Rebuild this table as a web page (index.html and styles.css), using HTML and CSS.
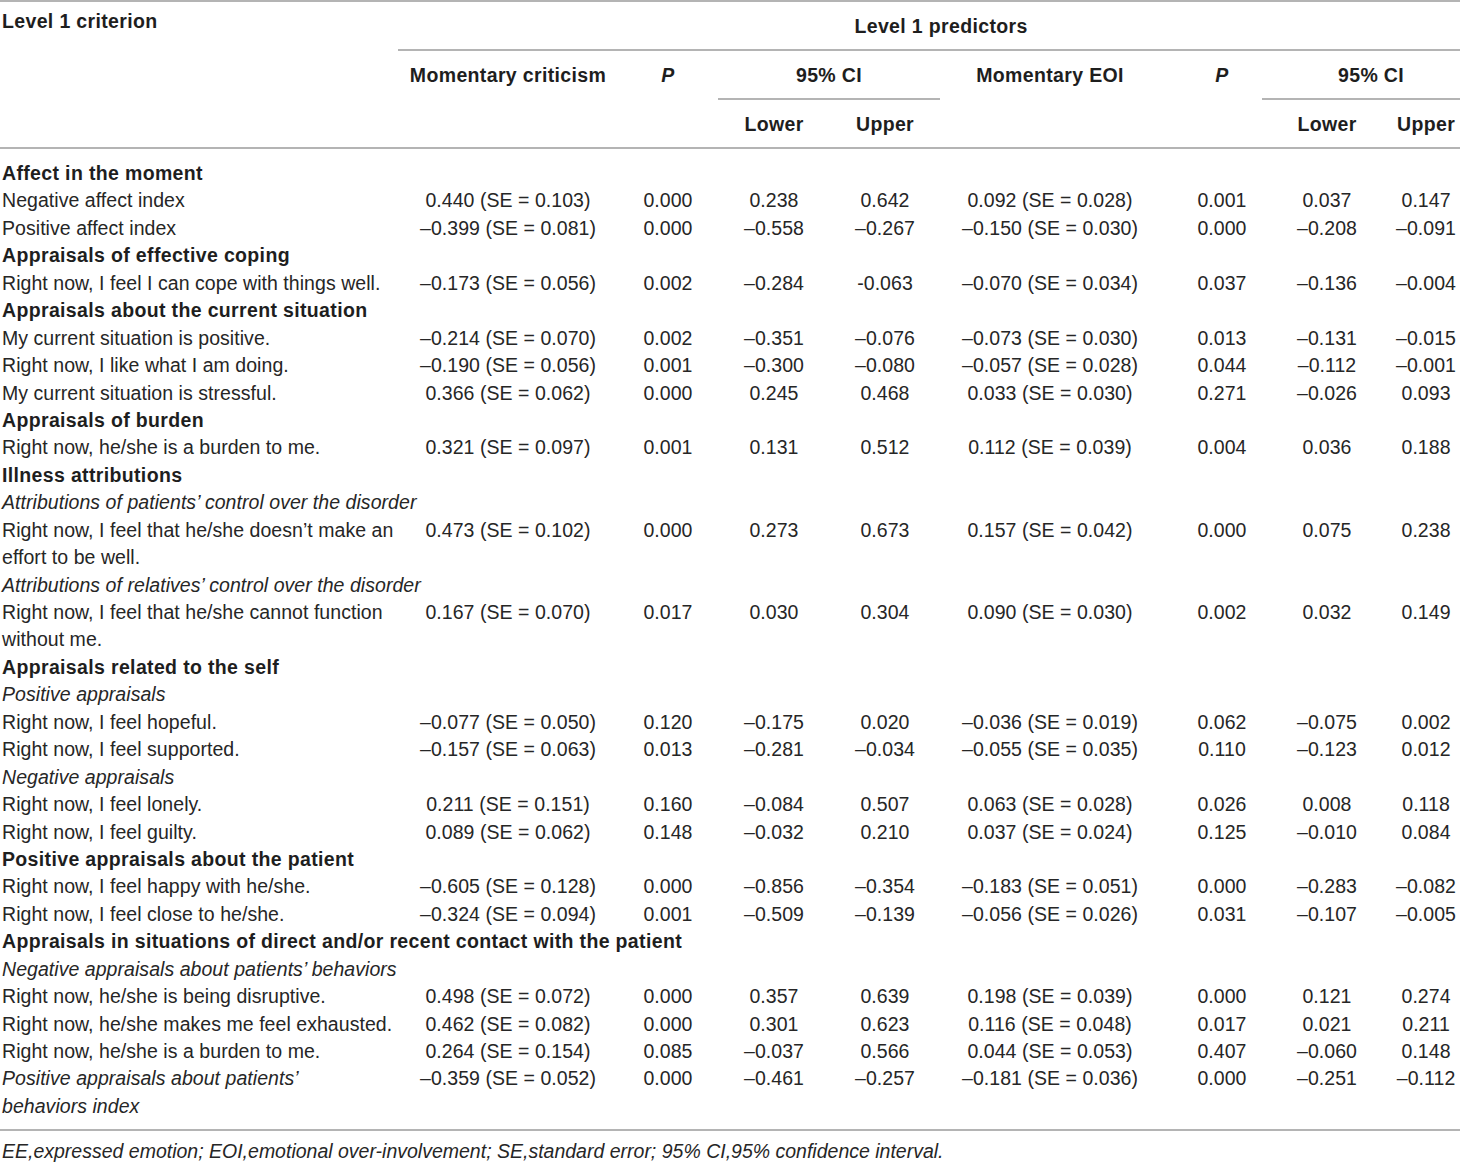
FILE: index.html
```html
<!DOCTYPE html>
<html lang="en">
<head>
<meta charset="utf-8">
<title>Level 1 predictors</title>
<link rel="stylesheet" href="styles.css">
</head>
<body>
<table class="tbl">
  <colgroup>
    <col class="c-crit">
    <col class="c-est">
    <col class="c-p">
    <col class="c-lo">
    <col class="c-up">
    <col class="c-est2">
    <col class="c-p2">
    <col class="c-lo2">
    <col class="c-up2">
  </colgroup>
  <thead>
    <tr>
      <th rowspan="3" class="h-crit">Level 1 criterion</th>
      <th colspan="8" class="h-pred line">Level 1 predictors</th>
    </tr>
    <tr>
      <th rowspan="2" class="h line">Momentary criticism</th>
      <th rowspan="2" class="h line"><i>P</i></th>
      <th colspan="2" class="h line">95% CI</th>
      <th rowspan="2" class="h line">Momentary EOI</th>
      <th rowspan="2" class="h line p2"><i>P</i></th>
      <th colspan="2" class="h line ci2">95% CI</th>
    </tr>
    <tr>
      <th class="h line">Lower</th>
      <th class="h line">Upper</th>
      <th class="h line">Lower</th>
      <th class="h line">Upper</th>
    </tr>
  </thead>
  <tbody>
    <tr class="sec first"><td colspan="9">Affect in the moment</td></tr>
    <tr><td>Negative affect index</td><td>0.440 (SE = 0.103)</td><td>0.000</td><td>0.238</td><td>0.642</td><td>0.092 (SE = 0.028)</td><td class="p2">0.001</td><td>0.037</td><td>0.147</td></tr>
    <tr><td>Positive affect index</td><td>–0.399 (SE = 0.081)</td><td>0.000</td><td>–0.558</td><td>–0.267</td><td>–0.150 (SE = 0.030)</td><td class="p2">0.000</td><td>–0.208</td><td>–0.091</td></tr>
    <tr class="sec"><td colspan="9">Appraisals of effective coping</td></tr>
    <tr><td>Right now, I feel I can cope with things well.</td><td>–0.173 (SE = 0.056)</td><td>0.002</td><td>–0.284</td><td>-0.063</td><td>–0.070 (SE = 0.034)</td><td class="p2">0.037</td><td>–0.136</td><td>–0.004</td></tr>
    <tr class="sec"><td colspan="9">Appraisals about the current situation</td></tr>
    <tr><td>My current situation is positive.</td><td>–0.214 (SE = 0.070)</td><td>0.002</td><td>–0.351</td><td>–0.076</td><td>–0.073 (SE = 0.030)</td><td class="p2">0.013</td><td>–0.131</td><td>–0.015</td></tr>
    <tr><td>Right now, I like what I am doing.</td><td>–0.190 (SE = 0.056)</td><td>0.001</td><td>–0.300</td><td>–0.080</td><td>–0.057 (SE = 0.028)</td><td class="p2">0.044</td><td>–0.112</td><td>–0.001</td></tr>
    <tr><td>My current situation is stressful.</td><td>0.366 (SE = 0.062)</td><td>0.000</td><td>0.245</td><td>0.468</td><td>0.033 (SE = 0.030)</td><td class="p2">0.271</td><td>–0.026</td><td>0.093</td></tr>
    <tr class="sec"><td colspan="9">Appraisals of burden</td></tr>
    <tr><td>Right now, he/she is a burden to me.</td><td>0.321 (SE = 0.097)</td><td>0.001</td><td>0.131</td><td>0.512</td><td>0.112 (SE = 0.039)</td><td class="p2">0.004</td><td>0.036</td><td>0.188</td></tr>
    <tr class="sec"><td colspan="9">Illness attributions</td></tr>
    <tr class="sub"><td colspan="9">Attributions of patients’ control over the disorder</td></tr>
    <tr><td>Right now, I feel that he/she doesn’t make an<br>effort to be well.</td><td>0.473 (SE = 0.102)</td><td>0.000</td><td>0.273</td><td>0.673</td><td>0.157 (SE = 0.042)</td><td class="p2">0.000</td><td>0.075</td><td>0.238</td></tr>
    <tr class="sub"><td colspan="9">Attributions of relatives’ control over the disorder</td></tr>
    <tr><td>Right now, I feel that he/she cannot function<br>without me.</td><td>0.167 (SE = 0.070)</td><td>0.017</td><td>0.030</td><td>0.304</td><td>0.090 (SE = 0.030)</td><td class="p2">0.002</td><td>0.032</td><td>0.149</td></tr>
    <tr class="sec"><td colspan="9">Appraisals related to the self</td></tr>
    <tr class="sub"><td colspan="9">Positive appraisals</td></tr>
    <tr><td>Right now, I feel hopeful.</td><td>–0.077 (SE = 0.050)</td><td>0.120</td><td>–0.175</td><td>0.020</td><td>–0.036 (SE = 0.019)</td><td class="p2">0.062</td><td>–0.075</td><td>0.002</td></tr>
    <tr><td>Right now, I feel supported.</td><td>–0.157 (SE = 0.063)</td><td>0.013</td><td>–0.281</td><td>–0.034</td><td>–0.055 (SE = 0.035)</td><td class="p2">0.110</td><td>–0.123</td><td>0.012</td></tr>
    <tr class="sub"><td colspan="9">Negative appraisals</td></tr>
    <tr><td>Right now, I feel lonely.</td><td>0.211 (SE = 0.151)</td><td>0.160</td><td>–0.084</td><td>0.507</td><td>0.063 (SE = 0.028)</td><td class="p2">0.026</td><td>0.008</td><td>0.118</td></tr>
    <tr><td>Right now, I feel guilty.</td><td>0.089 (SE = 0.062)</td><td>0.148</td><td>–0.032</td><td>0.210</td><td>0.037 (SE = 0.024)</td><td class="p2">0.125</td><td>–0.010</td><td>0.084</td></tr>
    <tr class="sec"><td colspan="9">Positive appraisals about the patient</td></tr>
    <tr><td>Right now, I feel happy with he/she.</td><td>–0.605 (SE = 0.128)</td><td>0.000</td><td>–0.856</td><td>–0.354</td><td>–0.183 (SE = 0.051)</td><td class="p2">0.000</td><td>–0.283</td><td>–0.082</td></tr>
    <tr><td>Right now, I feel close to he/she.</td><td>–0.324 (SE = 0.094)</td><td>0.001</td><td>–0.509</td><td>–0.139</td><td>–0.056 (SE = 0.026)</td><td class="p2">0.031</td><td>–0.107</td><td>–0.005</td></tr>
    <tr class="sec"><td colspan="9">Appraisals in situations of direct and/or recent contact with the patient</td></tr>
    <tr class="sub"><td colspan="9">Negative appraisals about patients’ behaviors</td></tr>
    <tr><td>Right now, he/she is being disruptive.</td><td>0.498 (SE = 0.072)</td><td>0.000</td><td>0.357</td><td>0.639</td><td>0.198 (SE = 0.039)</td><td class="p2">0.000</td><td>0.121</td><td>0.274</td></tr>
    <tr><td>Right now, he/she makes me feel exhausted.</td><td>0.462 (SE = 0.082)</td><td>0.000</td><td>0.301</td><td>0.623</td><td>0.116 (SE = 0.048)</td><td class="p2">0.017</td><td>0.021</td><td>0.211</td></tr>
    <tr><td>Right now, he/she is a burden to me.</td><td>0.264 (SE = 0.154)</td><td>0.085</td><td>–0.037</td><td>0.566</td><td>0.044 (SE = 0.053)</td><td class="p2">0.407</td><td>–0.060</td><td>0.148</td></tr>
    <tr class="last"><td class="it">Positive appraisals about patients’<br>behaviors index</td><td>–0.359 (SE = 0.052)</td><td>0.000</td><td>–0.461</td><td>–0.257</td><td>–0.181 (SE = 0.036)</td><td class="p2">0.000</td><td>–0.251</td><td>–0.112</td></tr>
  </tbody>
  <tfoot>
    <tr><td colspan="9" class="foot">EE,expressed emotion; EOI,emotional over-involvement; SE,standard error; 95% CI,95% confidence interval.</td></tr>
  </tfoot>
</table>
</body>
</html>
```

FILE: styles.css
```css
html, body {
  margin: 0;
  padding: 0;
  background: #ffffff;
}

body {
  font-family: "Liberation Sans", Arial, Helvetica, sans-serif;
  color: #262626;
}

.tbl {
  width: 1460px;
  table-layout: fixed;
  border-collapse: separate;
  border-spacing: 0;
  border-top: 2px solid #b4b4b4;
  font-size: 19.5px;
  line-height: 27.44px;
  letter-spacing: 0.05px;
}

.c-crit { width: 398px; }
.c-est  { width: 220px; }
.c-p    { width: 100px; }
.c-lo   { width: 112px; }
.c-up   { width: 110px; }
.c-est2 { width: 220px; }
.c-p2   { width: 102px; }
.c-lo2  { width: 130px; }
.c-up2  { width: 68px; }

th {
  font-weight: bold;
  letter-spacing: 0.35px;
  color: #1e1e1e;
  text-align: center;
  vertical-align: top;
  padding: 11px 0 9px 0;
  line-height: 27px;
}

th.line {
  border-bottom: 2px solid #b4b4b4;
}

th.h-crit {
  text-align: left;
  padding: 6px 0 0 2px;
  border-bottom: 2px solid #b4b4b4;
}

th.h-pred {
  padding-left: 24px;
}

th.ci2 {
  padding-left: 20px;
}

th i {
  font-style: italic;
}

.p2 {
  padding-left: 22px;
}

td {
  padding: 0;
  text-align: center;
  vertical-align: top;
  white-space: nowrap;
}

td:first-child {
  text-align: left;
  padding-left: 2px;
}

tr.sec td {
  font-weight: bold;
  letter-spacing: 0.35px;
  color: #1e1e1e;
}

tr.sub td,
td.it {
  font-style: italic;
}

tr.first td {
  padding-top: 11px;
}

tr.last td {
  padding-bottom: 9px;
}

td.foot {
  border-top: 2px solid #b4b4b4;
  padding-top: 7px;
  font-style: italic;
  text-align: left;
  letter-spacing: 0;
}
```
